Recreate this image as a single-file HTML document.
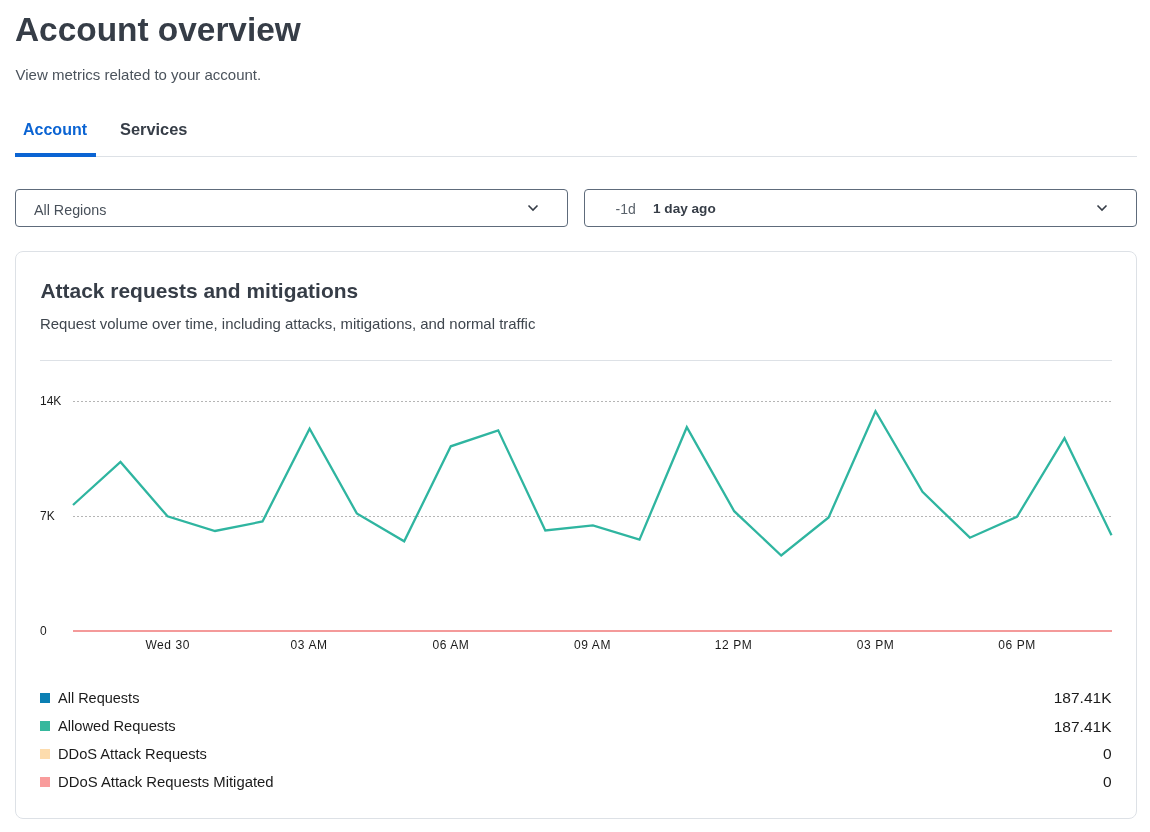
<!DOCTYPE html>
<html><head><meta charset="utf-8">
<style>
html,body{margin:0;padding:0;background:#fff;width:1150px;height:832px;overflow:hidden;}
body{font-family:"Liberation Sans",sans-serif;position:relative;}
#wrap{position:absolute;left:0;top:0;width:1150px;height:832px;will-change:transform;}
.a{position:absolute;white-space:nowrap;line-height:1;}
#title{left:15px;top:12.7px;font-size:33.4px;font-weight:bold;color:#363d47;}
#sub{left:15.5px;top:67.3px;font-size:15px;color:#4b535c;}
.tab{top:121.9px;font-size:16px;font-weight:bold;}
#tab1{left:23px;color:#0b64d3;}
#tab2{left:120px;color:#363d47;font-size:16.4px;top:121.4px;}
#tabline{left:15px;top:156px;width:1122px;height:1px;background:#dde1e6;}
#tabul{left:15px;top:153px;width:81px;height:4px;background:#0b64d3;}
.dd{position:absolute;top:189px;height:36px;width:551px;border:1px solid #5e6b7b;border-radius:4px;}
#dd1{left:15px;}
#dd2{left:584px;}
.chev{position:absolute;}
#card{left:15px;top:251px;width:1120px;height:566px;border:1px solid #dde1e6;border-radius:8px;}
#ctitle{left:40.5px;top:281.4px;font-size:20.95px;font-weight:bold;color:#363d47;}
#csub{left:40px;top:317.2px;font-size:14.95px;color:#3f464e;}
#csep{left:40px;top:360px;width:1072px;height:1px;background:#dde1e6;}
.ax{font-size:12px;color:#1b1b1b;}
.xl{letter-spacing:0.6px;transform:translateX(-50%);}
.lg{font-size:14.7px;color:#1b1b1b;}
.sw{position:absolute;left:40px;width:10px;height:10px;}
.val{font-size:15.5px;color:#1b1b1b;text-align:right;right:38.5px;}
</style></head><body>
<div id="wrap">
<div class="a" id="title">Account overview</div>
<div class="a" id="sub">View metrics related to your account.</div>
<div class="a tab" id="tab1">Account</div>
<div class="a tab" id="tab2">Services</div>
<div class="a" id="tabline"></div>
<div class="a" id="tabul"></div>

<div class="dd" id="dd1"></div>
<div class="a" style="left:34px;top:203.4px;font-size:14.3px;color:#48505a;">All Regions</div>
<svg class="chev" style="left:527px;top:203px" width="12" height="10" viewBox="0 0 12 10"><path d="M1.5 2.5 L6 7 L10.5 2.5" fill="none" stroke="#363d47" stroke-width="1.6"/></svg>

<div class="dd" id="dd2"></div>
<div class="a" style="left:615.5px;top:201.9px;font-size:14px;color:#5a626b;">-1d</div>
<div class="a" style="left:653px;top:202.4px;font-size:13.6px;font-weight:bold;color:#363d47;">1 day ago</div>
<svg class="chev" style="left:1096px;top:203px" width="12" height="10" viewBox="0 0 12 10"><path d="M1.5 2.5 L6 7 L10.5 2.5" fill="none" stroke="#363d47" stroke-width="1.6"/></svg>

<div class="a" id="card"></div>
<div class="a" id="ctitle">Attack requests and mitigations</div>
<div class="a" id="csub">Request volume over time, including attacks, mitigations, and normal traffic</div>
<div class="a" id="csep"></div>

<svg class="a" style="left:0;top:0" width="1150" height="832">
  <line x1="73" y1="401.5" x2="1112" y2="401.5" stroke="#b5b5b5" stroke-width="1" stroke-dasharray="2 2"/>
  <line x1="73" y1="516.5" x2="1112" y2="516.5" stroke="#b5b5b5" stroke-width="1" stroke-dasharray="2 2"/>
  <line x1="73" y1="631" x2="1112" y2="631" stroke="#f49a9a" stroke-width="2"/>
  <polyline fill="none" stroke="#2fb5a0" stroke-width="2.3" stroke-linejoin="miter"
    points="73,505 120.5,462 167.5,516.3 215,531 262.5,521.5 309.6,428.7 356.8,513.4 404.2,541.3 450.8,446.3 498.2,430.3 545.3,530.5 592.9,525.3 639.5,539.6 686.8,427.2 734.2,511.2 781.2,555.5 828.6,517.5 875.5,411.2 922.5,491.9 969.9,537.7 1016.9,516.9 1064.5,438.2 1111.5,535.2"/>
</svg>

<div class="a ax" style="left:40px;top:395px;">14K</div>
<div class="a ax" style="left:40px;top:510px;">7K</div>
<div class="a ax" style="left:40px;top:625px;">0</div>
<div class="a ax xl" style="left:167.75px;top:639px;">Wed 30</div>
<div class="a ax xl" style="left:309.1px;top:639px;">03 AM</div>
<div class="a ax xl" style="left:450.9px;top:639px;">06 AM</div>
<div class="a ax xl" style="left:592.5px;top:639px;">09 AM</div>
<div class="a ax xl" style="left:733.6px;top:639px;">12 PM</div>
<div class="a ax xl" style="left:875.6px;top:639px;">03 PM</div>
<div class="a ax xl" style="left:1017px;top:639px;">06 PM</div>

<div class="sw" style="top:693px;background:#0b7fb3;"></div>
<div class="sw" style="top:721px;background:#36b89d;"></div>
<div class="sw" style="top:749px;background:#fddcad;"></div>
<div class="sw" style="top:777px;background:#f99c9c;"></div>
<div class="a lg" style="left:58px;top:691.3px;font-size:14.5px;">All Requests</div>
<div class="a lg" style="left:58px;top:718.5px;">Allowed Requests</div>
<div class="a lg" style="left:58px;top:746.9px;font-size:14.65px;">DDoS Attack Requests</div>
<div class="a lg" style="left:58px;top:774.8px;font-size:14.87px;">DDoS Attack Requests Mitigated</div>
<div class="a val" style="top:690.3px;">187.41K</div>
<div class="a val" style="top:718.5px;">187.41K</div>
<div class="a val" style="top:745.9px;">0</div>
<div class="a val" style="top:774px;">0</div>
</div>
</body></html>
